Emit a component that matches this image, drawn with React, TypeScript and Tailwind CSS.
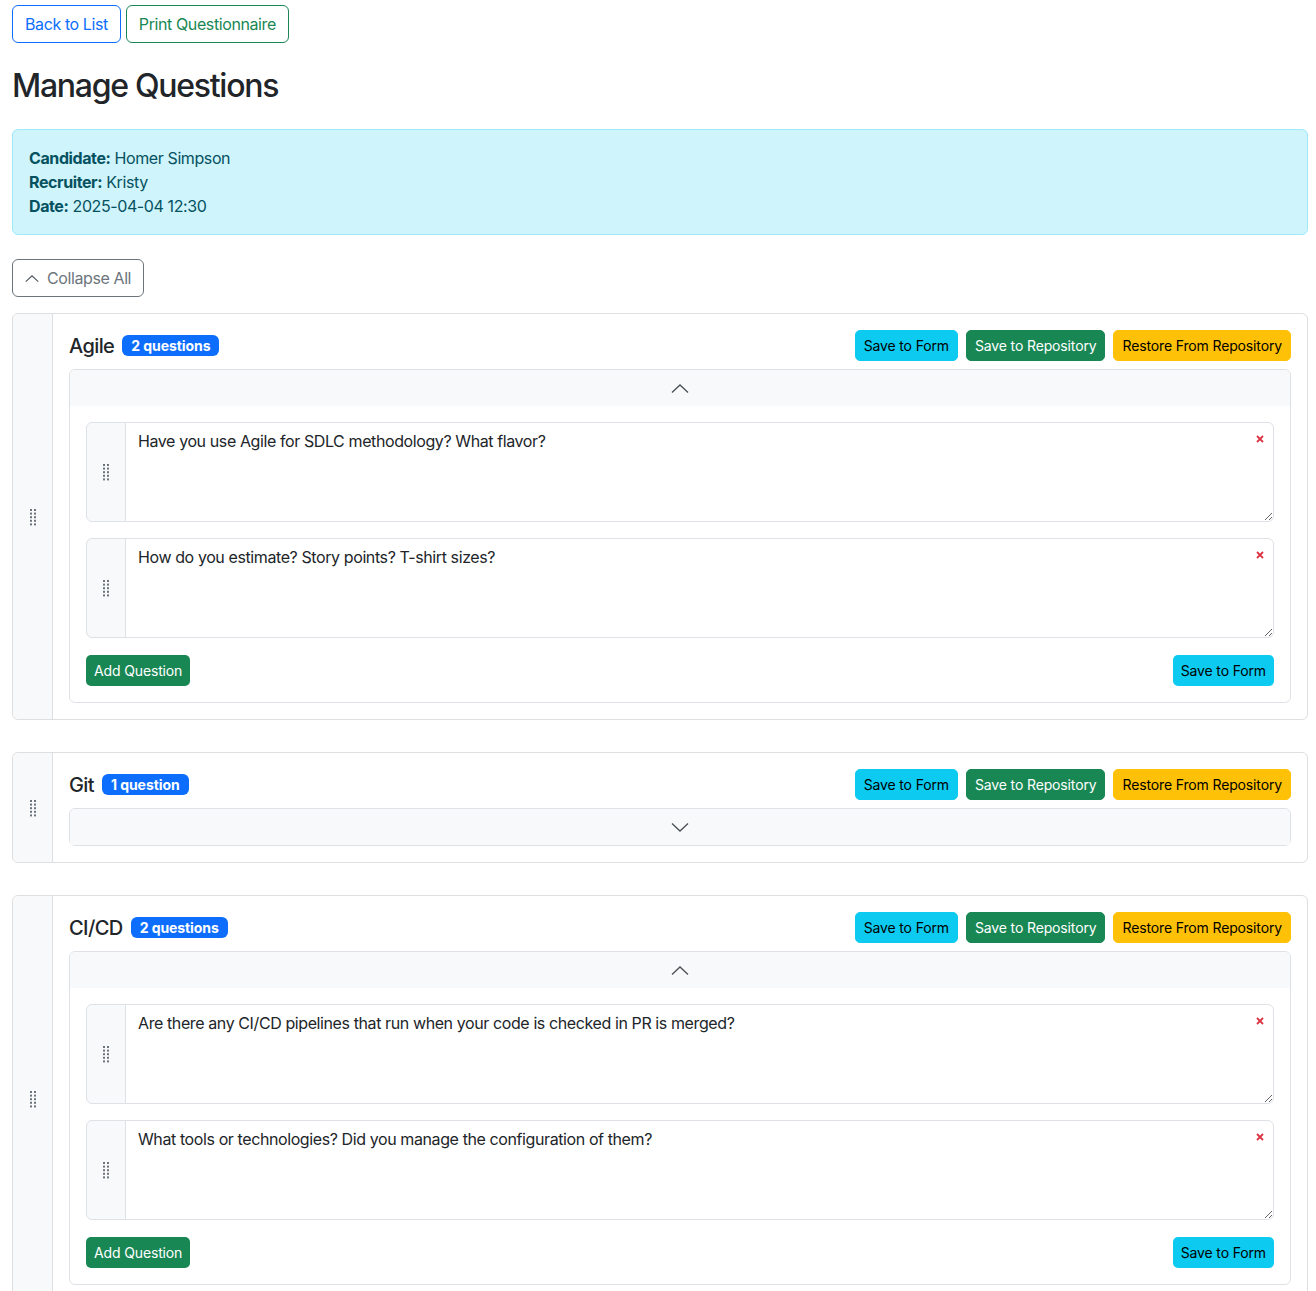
import React from 'react';

interface Section {
  title: string;
  questions: string[];
  open: boolean;
}

const sections: Section[] = [
  {
    title: 'Agile',
    questions: [
      'Have you use Agile for SDLC methodology? What flavor?',
      'How do you estimate? Story points? T-shirt sizes?',
    ],
    open: true,
  },
  { title: 'Git', questions: ['—'], open: false },
  {
    title: 'CI/CD',
    questions: [
      'Are there any CI/CD pipelines that run when your code is checked in PR is merged?',
      'What tools or technologies? Did you manage the configuration of them?',
    ],
    open: true,
  },
];

const Grip: React.FC = () => (
  <svg width="8" height="18" viewBox="0 0 8 18" className="text-[#6c757d]">
    {[0, 1, 2, 3, 4].map((r) =>
      [0, 1].map((c) => (
        <rect key={`${r}-${c}`} x={1 + c * 4} y={1 + r * 3.6} width="2" height="2" fill="currentColor" />
      ))
    )}
  </svg>
);

const Chevron: React.FC<{ up?: boolean; size?: number }> = ({ up, size = 18 }) => (
  <svg width={size} height={size / 2} viewBox="0 0 18 9" fill="none" stroke="#495057" strokeWidth="1.3">
    {up ? <path d="M1 8.5 L9 1 L17 8.5" /> : <path d="M1 0.5 L9 8 L17 0.5" />}
  </svg>
);

const SmallBtn: React.FC<{ color: 'info' | 'success' | 'warning'; children: React.ReactNode }> = ({ color, children }) => {
  const styles = {
    info: 'bg-[#0dcaf0] border-[#0dcaf0] text-black',
    success: 'bg-[#198754] border-[#198754] text-white',
    warning: 'bg-[#ffc107] border-[#ffc107] text-black',
  };
  return (
    <button className={`h-[31px] px-2 border rounded-[5px] text-[14px] leading-[21px] tracking-[-0.01em] whitespace-nowrap ${styles[color]}`}>
      {children}
    </button>
  );
};

const QuestionRow: React.FC<{ text: string }> = ({ text }) => (
  <div className="flex h-[100px]">
    <div className="w-[40px] flex items-center justify-center bg-[#f8f9fa] border border-[#dee2e6] rounded-l-[6px]">
      <Grip />
    </div>
    <div className="relative flex-1 -ml-px">
      <textarea
        readOnly
        defaultValue={text}
        className="block w-full h-full border border-[#dee2e6] rounded-r-[6px] pl-3 pr-8 py-[6px] text-[16px] leading-6 tracking-[-0.025em] text-[#212529] outline-none"
      />
      <svg width="8" height="8" viewBox="0 0 8 8" className="absolute top-[13px] right-[10px]" stroke="#dc3545" strokeWidth="1.8">
        <path d="M1 1 L7 7 M7 1 L1 7" />
      </svg>
    </div>
  </div>
);

const SectionCard: React.FC<{ section: Section }> = ({ section }) => {
  const count = section.questions.length;
  return (
    <div className="flex border border-[#dfdfdf] rounded-[6px] mb-[32px]">
      <div className="w-[40px] shrink-0 flex items-center justify-center bg-[#f8f9fa] border-r border-[#dfdfdf] rounded-l-[6px]">
        <Grip />
      </div>
      <div className="flex-1 p-4">
        <div className="flex items-center justify-between mb-[8px]">
          <div className="flex items-center gap-2">
            <span className="text-[20px] font-medium text-[#212529] leading-6 tracking-[-0.03em]">{section.title}</span>
            <span className="bg-[#0d6efd] text-white text-[14px] font-bold leading-none px-[9px] py-[3.5px] rounded-[6px] tracking-[-0.005em]">
              {count} {count === 1 ? 'question' : 'questions'}
            </span>
          </div>
          <div className="flex gap-2">
            <SmallBtn color="info">Save to Form</SmallBtn>
            <SmallBtn color="success">Save to Repository</SmallBtn>
            <SmallBtn color="warning">Restore From Repository</SmallBtn>
          </div>
        </div>
        <div className="border border-[#dee2e6] rounded-[6px]">
          <div className="h-[36px] bg-[#f8f9fa] flex items-center justify-center rounded-t-[6px]">
            <Chevron up={section.open} />
          </div>
          {section.open && (
            <div className="p-4 flex flex-col">
              <div className="flex flex-col gap-4">
                {section.questions.map((q) => (
                  <QuestionRow key={q} text={q} />
                ))}
              </div>
              <div className="flex justify-between mt-[17px]">
                <button className="h-[31px] px-2 rounded-[5px] bg-[#198754] text-white text-[14px] tracking-[-0.01em]">Add Question</button>
                <button className="h-[31px] px-2 rounded-[5px] bg-[#0dcaf0] text-black text-[14px] tracking-[-0.01em]">Save to Form</button>
              </div>
            </div>
          )}
        </div>
      </div>
    </div>
  );
};

export default function App() {
  return (
    <div
      className="pl-3 pr-2 pt-[5px] text-[#212529] bg-white min-h-screen tracking-[-0.025em]"
      style={{ fontFamily: 'Inter, "Liberation Sans", sans-serif' }}
    >
      <div className="flex gap-[5px]">
        <button className="h-[38px] px-3 border border-[#0d6efd] text-[#0d6efd] rounded-[6px] text-[16px]">Back to List</button>
        <button className="h-[38px] px-3 border border-[#198754] text-[#198754] rounded-[6px] text-[16px]">Print Questionnaire</button>
      </div>
      <h2 className="text-[32px] font-medium leading-[38px] mt-[24px] mb-[24px] tracking-[-0.04em]">Manage Questions</h2>
      <div className="bg-[#cff4fc] border border-[#9eeaf9] text-[#055160] rounded-[6px] p-4 text-[16px] leading-6">
        <div><b className="font-bold">Candidate:</b> Homer Simpson</div>
        <div><b className="font-bold">Recruiter:</b> Kristy</div>
        <div><b className="font-bold">Date:</b> 2025-04-04 12:30</div>
      </div>
      <button className="mt-6 mb-4 h-[38px] px-3 border border-[#6c757d] text-[#6c757d] rounded-[6px] text-[16px] flex items-center gap-2">
        <Chevron up size={14} />
        Collapse All
      </button>
      {sections.map((s) => (
        <SectionCard key={s.title} section={s} />
      ))}
    </div>
  );
}
